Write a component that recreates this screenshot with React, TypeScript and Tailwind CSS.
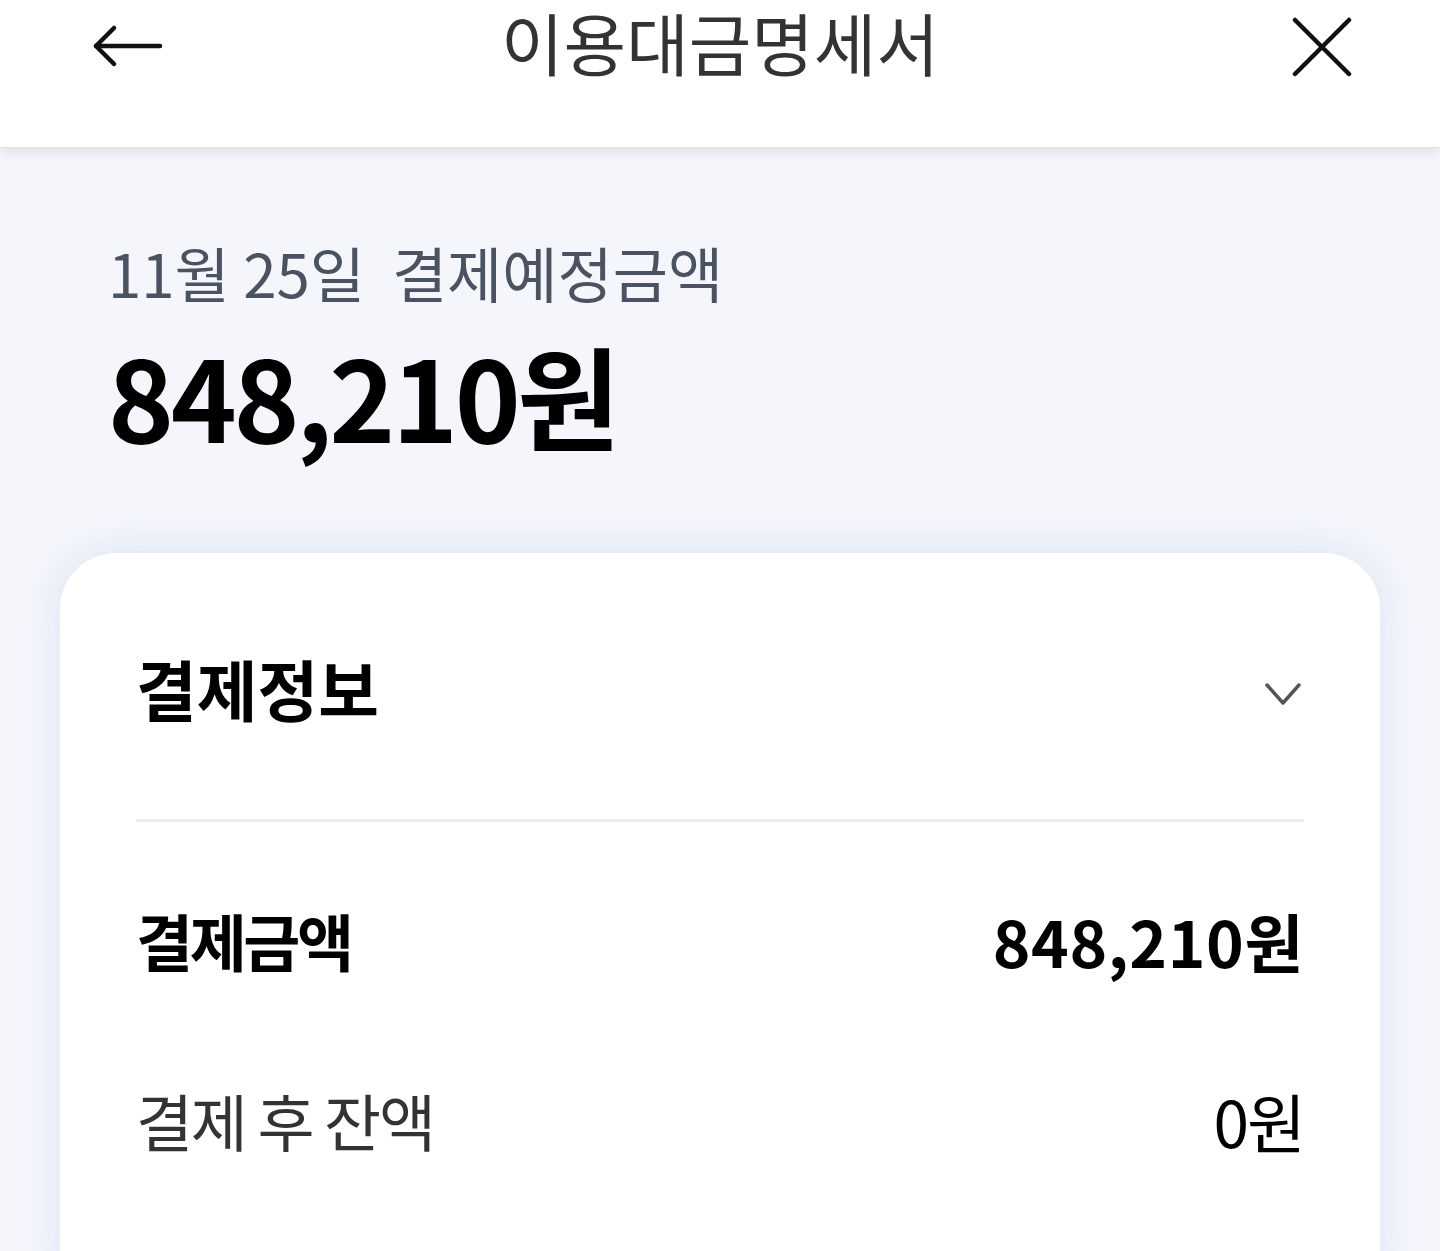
import React from 'react';

const FONT = { fontFamily: '"Noto Sans CJK KR", "Noto Sans", sans-serif' };

const BackArrow: React.FC = () => (
  <svg width="72" height="44" viewBox="0 0 72 44" fill="none" stroke="#111" strokeWidth="4.5" strokeLinecap="round" strokeLinejoin="round">
    <path d="M68 22H4" />
    <path d="M22 4L4 22l18 18" />
  </svg>
);

const CloseIcon: React.FC = () => (
  <svg width="60" height="60" viewBox="0 0 60 60" fill="none" stroke="#111" strokeWidth="4.5" strokeLinecap="round">
    <path d="M3 3l54 54M57 3L3 57" />
  </svg>
);

const Chevron: React.FC = () => (
  <svg width="38" height="26" viewBox="0 0 38 26" fill="none" stroke="#555" strokeWidth="3.5" strokeLinecap="round" strokeLinejoin="round">
    <path d="M3 4l16 18L35 4" />
  </svg>
);

const App: React.FC = () => {
  return (
    <div className="w-[1440px] h-[1251px] overflow-hidden bg-[#f4f6fb]" style={FONT}>
      <header className="relative z-10 h-[148px] bg-white shadow-[0_3px_14px_rgba(0,0,0,0.10)] border-b border-[#e2e4e8]">
        <div className="grid grid-cols-[1fr_auto_1fr] items-start px-[92px]">
          <div className="mt-[24px]">
            <BackArrow />
          </div>
          <h1 className="text-[68px] leading-[84px] font-normal tracking-normal text-[#333]">
            이용대금명세서
          </h1>
          <div className="mt-[17px] -mr-[4px] justify-self-end">
            <CloseIcon />
          </div>
        </div>
      </header>

      <section className="px-[108px] pt-[84px]">
        <p className="text-[60px] leading-[80px] tracking-normal text-[#4b5262]">
          11월 25일&nbsp; 결제예정금액
        </p>
        <p className="mt-[22px] text-[112px] leading-[120px] font-bold tracking-[-0.03em] text-black">
          848,210원
        </p>
      </section>

      <div className="mx-[60px] mt-[99px] h-[760px] rounded-[56px] bg-white shadow-[0_0_40px_rgba(170,188,235,0.35)] px-[76px]">
        <div className="flex items-center justify-between pt-[94px] pb-[92px]">
          <h2 className="text-[66px] leading-[80px] font-bold tracking-normal text-black">결제정보</h2>
          <div className="mt-[14px] mr-[2px]">
            <Chevron />
          </div>
        </div>
        <div className="h-[3px] bg-[#ececee]" />
        <div className="flex items-center justify-between pt-[78px]">
          <span className="text-[62px] leading-[80px] font-bold tracking-[-0.055em] text-black">결제금액</span>
          <span className="text-[64px] leading-[80px] font-bold tracking-[0.01em] text-black">848,210원</span>
        </div>
        <div className="flex items-center justify-between pt-[100px]">
          <span className="text-[62px] leading-[80px] tracking-[-0.035em] text-[#333]">결제 후 잔액</span>
          <span className="text-[64px] leading-[80px] tracking-[-0.03em] text-black">0원</span>
        </div>
      </div>
    </div>
  );
};

export default App;
